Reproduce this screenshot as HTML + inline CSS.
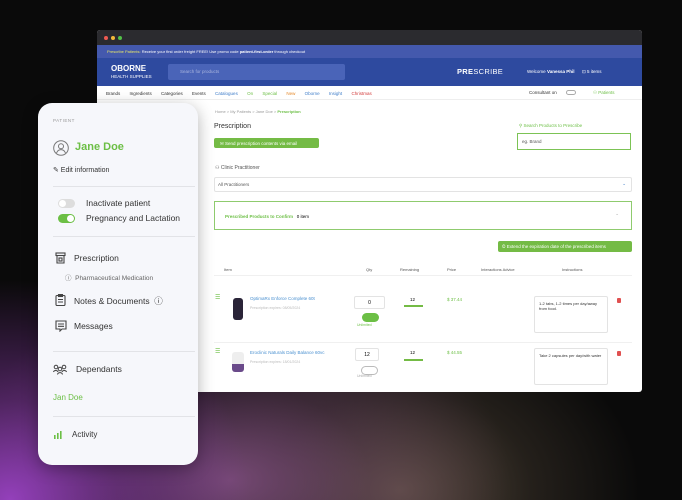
<!DOCTYPE html>
<html><head><meta charset="utf-8"><style>
*{margin:0;padding:0;box-sizing:border-box}
body{width:682px;height:500px;overflow:hidden;font-family:"Liberation Sans",sans-serif;position:relative;
background:radial-gradient(ellipse 240px 220px at 10px 500px,#9440bb 0%,rgba(130,55,160,.55) 45%,rgba(0,0,0,0) 100%),
radial-gradient(ellipse 280px 190px at 230px 480px,rgba(140,85,140,.8) 0%,rgba(110,65,110,.35) 50%,rgba(0,0,0,0) 100%),
radial-gradient(ellipse 240px 180px at 400px 490px,rgba(105,90,72,.85) 0%,rgba(85,72,58,.35) 55%,rgba(0,0,0,0) 100%),
#0a0a0a}
.a{position:absolute}
.win{left:97px;top:30px;width:545px;height:362px;background:#fff;overflow:hidden;border-radius:3px}
.t{font-size:5px;color:#555}
.g{color:#6cbf45}
.inp{border:1px solid #e3e3e3;background:#fff;border-radius:2px}
.p{left:38px;top:103px;width:160px;height:362px;background:#f6f7fb;border-radius:14px;box-shadow:0 4px 16px rgba(0,0,0,.3)}
.p .a{color:#333}
.hr{height:1px;background:#e2e3e7;left:15px;width:142px}
.lbl{font-size:9px;color:#333}
.tg{width:17px;height:9px;border-radius:5px}
svg{display:block}
</style></head><body>
<div class="a win">
 <div class="a" style="left:0;top:0;width:545px;height:15px;background:#2b2b2f"></div>
 <div class="a" style="left:7px;top:6px;width:4px;height:4px;border-radius:50%;background:#ee5a52"></div>
 <div class="a" style="left:14px;top:6px;width:4px;height:4px;border-radius:50%;background:#f3b93a"></div>
 <div class="a" style="left:21px;top:6px;width:4px;height:4px;border-radius:50%;background:#52c148"></div>
 <div class="a" style="left:0;top:15px;width:545px;height:13px;background:#4459ad"></div>
 <div class="a" style="left:10px;top:19px;font-size:4px;color:#fff"><span style="color:#e6e66a">Prescribe Patients:</span> Receive your first order freight FREE! Use promo code <b>patient-first-order</b> through checkout</div>
 <div class="a" style="left:0;top:28px;width:545px;height:28px;background:#2e4a9f"></div>
 <div class="a" style="left:14px;top:35px;color:#fff;font-size:8px;font-weight:bold;line-height:7px">OBORNE<br><span style="font-size:4.5px;font-weight:normal">HEALTH SUPPLIES</span></div>
 <div class="a" style="left:71px;top:34px;width:177px;height:16px;background:#4a64b8;border-radius:2px;font-size:4.5px;color:#aab5de;padding:5px 0 0 12px">Search for products</div>
 <div class="a" style="left:360px;top:37px;color:#fff;font-size:7.5px;letter-spacing:.3px"><b>PRE</b>SCRIBE</div>
 <div class="a" style="left:430px;top:39px;color:#fff;font-size:4.5px">Welcome <b>Vanessa Phil</b> &nbsp;&nbsp;&nbsp;&nbsp; ⊡ 5 items</div>
 <div class="a" style="left:0;top:56px;width:545px;height:14px;background:#fff;border-bottom:1px solid #eee"></div>
 <div class="a" style="left:9px;top:61px;font-size:4.5px;color:#333;word-spacing:8px">Brands Ingredients Categories Events <span style="color:#3f7dc9">Catalogues</span> <span class="g">On&nbsp;Special</span> <span style="color:#e58a2c">New</span> <span style="color:#3f7dc9">Oborne&nbsp;Insight</span> <span style="color:#d23a3a">Christmas</span></div>
 <div class="a" style="left:432px;top:60px;font-size:4.5px;color:#333">Consultant on</div>
 <div class="a" style="left:469px;top:60px;width:10px;height:5px;border:1px solid #aaa;border-radius:3px"></div>
 <div class="a g" style="left:496px;top:60px;font-size:4.5px">⚇ Patients</div>
 <div class="a" style="left:118px;top:79px;font-size:4px;color:#999">Home &gt; My Patients &gt; Jane Doe &gt; <span class="g"><b>Prescription</b></span></div>
 <div class="a" style="left:117px;top:93px;font-size:7px;color:#333">Prescription</div>
 <div class="a" style="left:117px;top:108px;width:105px;height:10px;background:#74bb45;border-radius:2px;font-size:4.5px;color:#fff;padding:2.5px 0 0 6px">✉ Send prescription contents via email</div>
 <div class="a g" style="left:422px;top:93px;font-size:4.5px">⚲ Search Products to Prescribe</div>
 <div class="a" style="left:420px;top:103px;width:114px;height:17px;border:1px solid #7cc355;font-size:4.5px;color:#555;padding:5px 0 0 4px">eg. Brand</div>
 <div class="a t" style="left:118px;top:135px">⚇ Clinic Practitioner</div>
 <div class="a inp" style="left:117px;top:147px;width:418px;height:15px;font-size:4.5px;color:#555;padding:4px 0 0 3px">All Practitioners<span style="position:absolute;right:5px;top:3px;color:#3f7dc9">⌄</span></div>
 <div class="a" style="left:117px;top:171px;width:418px;height:29px;border:1px solid #8fcb6e;font-size:4.5px;padding:12px 0 0 10px"><b class="g">Prescribed Products to Confirm</b> &nbsp; 0 item<span style="position:absolute;right:12px;top:9px;color:#aaa">⌄</span></div>
 <div class="a" style="left:401px;top:211px;width:134px;height:11px;background:#74bb45;border-radius:2px;font-size:4.5px;color:#fff;padding:3px 0 0 4px">⏲ Extend the expiration date of the prescribed items</div>
 <div class="a t" style="left:127px;top:237px;font-size:4px">Item</div>
 <div class="a t" style="left:269px;top:237px;font-size:4px">Qty</div>
 <div class="a t" style="left:303px;top:237px;font-size:4px">Remaining</div>
 <div class="a t" style="left:350px;top:237px;font-size:4px">Price</div>
 <div class="a t" style="left:384px;top:237px;font-size:4px">Interactions Advice</div>
 <div class="a t" style="left:465px;top:237px;font-size:4px">Instructions</div>
 <div class="a" style="left:117px;top:245px;width:418px;height:1px;background:#f0f0f0"></div>
 <div class="a g" style="left:118px;top:264px;font-size:6px">☰</div>
 <div class="a" style="left:136px;top:268px;width:10px;height:22px;background:#2a2438;border-radius:3px"></div>
 <div class="a" style="left:153px;top:266px;font-size:4.5px;color:#4a90d0">OptimaRx Enforce Complete 60t</div>
 <div class="a" style="left:153px;top:276px;font-size:3.5px;color:#bbb">Prescription expires: 08/05/2024</div>
 <div class="a inp" style="left:257px;top:266px;width:31px;height:13px;font-size:5px;text-align:center;padding-top:3px">0</div>
 <div class="a tg" style="left:265px;top:283px;background:#6cbf45"></div>
 <div class="a g" style="left:260px;top:293px;font-size:3.5px">Unlimited</div>
 <div class="a" style="left:313px;top:267px;font-size:4.5px">12</div>
 <div class="a" style="left:307px;top:275px;width:19px;height:2px;background:#74bb45"></div>
 <div class="a g" style="left:350px;top:267px;font-size:4.5px">$ 37.44</div>
 <div class="a inp" style="left:437px;top:266px;width:74px;height:37px;font-size:4px;padding:4px;color:#333">1-2 tabs, 1-2 times per day/away from food.</div>
 <div class="a" style="left:520px;top:268px;width:4px;height:5px;background:#e05050;border-radius:1px"></div>
 <div class="a" style="left:117px;top:312px;width:418px;height:1px;background:#f0f0f0"></div>
 <div class="a g" style="left:118px;top:318px;font-size:6px">☰</div>
 <div class="a" style="left:135px;top:322px;width:12px;height:20px;background:linear-gradient(#eee 60%,#6a4a8a 60%);border-radius:3px"></div>
 <div class="a" style="left:153px;top:320px;font-size:4.5px;color:#4a90d0">Eroclinic Naturals Daily Balance 60vc</div>
 <div class="a" style="left:153px;top:330px;font-size:3.5px;color:#bbb">Prescription expires: 18/01/2024</div>
 <div class="a inp" style="left:258px;top:318px;width:24px;height:13px;font-size:5px;text-align:center;padding-top:3px">12</div>
 <div class="a tg" style="left:264px;top:336px;border:1px solid #bbb"></div>
 <div class="a" style="left:260px;top:344px;font-size:3.5px;color:#aaa">Unlimited</div>
 <div class="a" style="left:313px;top:320px;font-size:4.5px">12</div>
 <div class="a" style="left:307px;top:329px;width:19px;height:2px;background:#74bb45"></div>
 <div class="a g" style="left:350px;top:320px;font-size:4.5px">$ 44.55</div>
 <div class="a inp" style="left:437px;top:318px;width:74px;height:37px;font-size:4px;padding:4px;color:#333">Take 2 capsules per day/with water</div>
 <div class="a" style="left:520px;top:321px;width:4px;height:5px;background:#e05050;border-radius:1px"></div>
</div>
<div class="a p">
 <div class="a" style="left:15px;top:15px;font-size:4.5px;color:#999;letter-spacing:.5px">PATIENT</div>
 <div class="a" style="left:15px;top:37px"><svg width="16" height="16" viewBox="0 0 16 16" fill="none" stroke="#777" stroke-width="1"><circle cx="8" cy="8" r="7.3"/><circle cx="8" cy="6.3" r="2.5"/><path d="M3.5 13c1-2.5 2.7-3.4 4.5-3.4s3.5.9 4.5 3.4"/></svg></div>
 <div class="a" style="left:37px;top:38px;font-size:11px;font-weight:bold;color:#6cbf45">Jane Doe</div>
 <div class="a" style="left:15px;top:63px;font-size:7px">✎ Edit information</div>
 <div class="a hr" style="top:83px"></div>
 <div class="a tg" style="left:20px;top:96px;background:#ddd"></div>
 <div class="a" style="left:21px;top:97px;width:7px;height:7px;border-radius:50%;background:#fff"></div>
 <div class="a lbl" style="left:48px;top:95px;font-size:8.5px">Inactivate patient</div>
 <div class="a tg" style="left:20px;top:111px;background:#6cbf45"></div>
 <div class="a" style="left:29px;top:112px;width:7px;height:7px;border-radius:50%;background:#fff"></div>
 <div class="a lbl" style="left:48px;top:110px;font-size:8.5px">Pregnancy and Lactation</div>
 <div class="a hr" style="top:133px"></div>
 <div class="a" style="left:17px;top:149px"><svg width="11" height="12" viewBox="0 0 11 12" fill="none" stroke="#444" stroke-width="1.1"><rect x="1" y="1" width="9" height="2.5"/><path d="M2 3.5v7.5h7V3.5"/><rect x="4" y="6" width="3" height="3"/></svg></div>
 <div class="a lbl" style="left:36px;top:150px;font-size:8.5px">Prescription</div>
 <div class="a" style="left:27px;top:169px;font-size:6.5px;color:#666">ⓘ &nbsp;Pharmaceutical Medication</div>
 <div class="a" style="left:17px;top:191px"><svg width="11" height="12" viewBox="0 0 11 12" fill="none" stroke="#444" stroke-width="1.1"><rect x="1" y="1.5" width="9" height="10" rx="1"/><rect x="3.5" y=".5" width="4" height="2"/><path d="M3 5.5h5M3 8h5"/></svg></div>
 <div class="a lbl" style="left:36px;top:192px;font-size:8.5px">Notes &amp; Documents &nbsp;ⓘ</div>
 <div class="a" style="left:17px;top:217px"><svg width="12" height="12" viewBox="0 0 12 12" fill="none" stroke="#444" stroke-width="1.1"><path d="M1 1h10v8H7l-2 2V9H1z"/><path d="M3 4h6M3 6.3h6"/></svg></div>
 <div class="a lbl" style="left:36px;top:218px;font-size:8.5px">Messages</div>
 <div class="a hr" style="top:248px"></div>
 <div class="a" style="left:15px;top:261px"><svg width="14" height="11" viewBox="0 0 14 11" fill="none" stroke="#444" stroke-width="1"><circle cx="3" cy="3" r="1.8"/><circle cx="11" cy="3" r="1.8"/><circle cx="7" cy="5" r="1.8"/><path d="M0.5 8c.5-2 4-2 4.5 0M9 8c.5-2 4-2 4.5 0M4.5 10.5c.5-2.5 4.5-2.5 5 0"/></svg></div>
 <div class="a lbl" style="left:38px;top:261px;font-size:8.5px">Dependants</div>
 <div class="a" style="left:15px;top:290px;font-size:8px;color:#6cbf45">Jan Doe</div>
 <div class="a hr" style="top:313px"></div>
 <div class="a" style="left:16px;top:328px"><svg width="8" height="8" viewBox="0 0 8 8" fill="#6cbf45"><rect x="0" y="4" width="1.6" height="4"/><rect x="3" y="2" width="1.6" height="6"/><rect x="6" y="0" width="1.6" height="8"/></svg></div>
 <div class="a lbl" style="left:34px;top:327px;font-size:8px">Activity</div>
</div>
</body></html>
